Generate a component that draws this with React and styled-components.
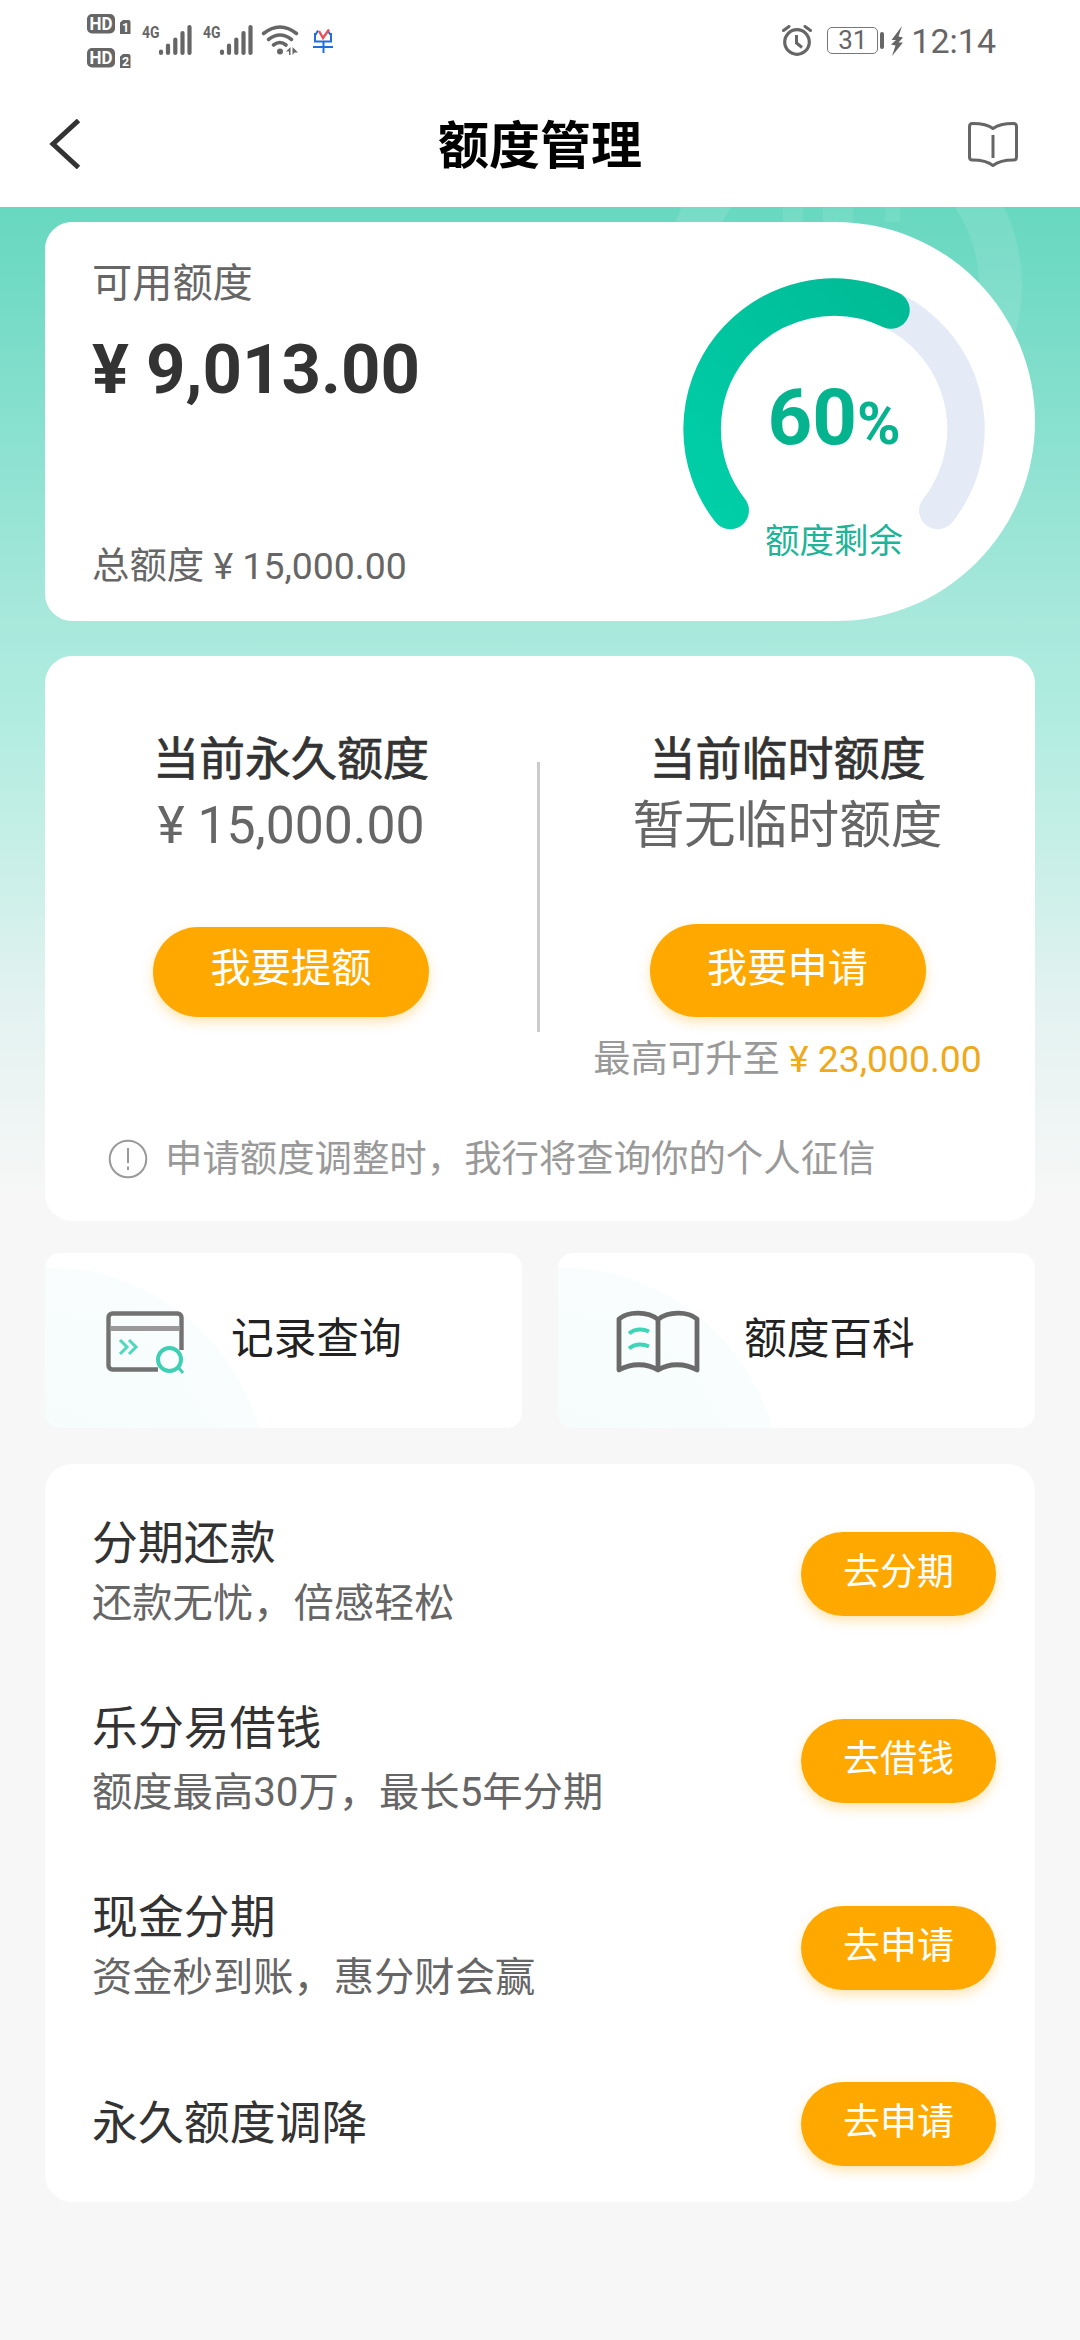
import React from 'react';
import styled, { createGlobalStyle } from 'styled-components';

const services = [
  { title: '分期还款', desc: '还款无忧，倍感轻松', action: '去分期' },
  { title: '乐分易借钱', desc: '额度最高30万，最长5年分期', action: '去借钱', gap: 7 },
  { title: '现金分期', desc: '资金秒到账，惠分财会赢', action: '去申请' },
  { title: '永久额度调降', action: '去申请' },
];

export default function App() {
  return (
    <>
      <GlobalStyle />
      <StatusBar>
        <StatusLeft />
        <StatusRight>
          <AlarmIcon />
          <Battery>31</Battery>
          <BoltIcon />
          <Time>12:14</Time>
        </StatusRight>
      </StatusBar>
      <NavBar>
        <BackIcon />
        <NavTitle>额度管理</NavTitle>
        <GuideIcon />
      </NavBar>
      <Page>
        <Watermark />
        <QuotaCard>
          <QuotaInfo>
            <QuotaLabel>可用额度</QuotaLabel>
            <QuotaAmount>¥ 9,013.00</QuotaAmount>
            <QuotaTotal>总额度 ¥ 15,000.00</QuotaTotal>
          </QuotaInfo>
          <Gauge />
        </QuotaCard>

        <LimitCard>
          <LimitColumns>
            <LimitColumn>
              <LimitTitle>当前永久额度</LimitTitle>
              <LimitValue>¥ 15,000.00</LimitValue>
              <LimitButton $height={90}>我要提额</LimitButton>
            </LimitColumn>
            <Divider />
            <LimitColumn>
              <LimitTitle>当前临时额度</LimitTitle>
              <LimitValue>暂无临时额度</LimitValue>
              <LimitButton $height={93}>我要申请</LimitButton>
              <LimitHint>
                最高可升至 <span>¥ 23,000.00</span>
              </LimitHint>
            </LimitColumn>
          </LimitColumns>
          <Notice>
            <InfoIcon />
            <p>申请额度调整时，我行将查询你的个人征信</p>
          </Notice>
        </LimitCard>

        <Tiles>
          <Tile>
            <RecordIcon />
            <p>记录查询</p>
          </Tile>
          <Tile>
            <WikiIcon />
            <p>额度百科</p>
          </Tile>
        </Tiles>

        <ServiceCard>
          {services.map(({ title, desc, action, gap }) => (
            <ServiceRow key={title}>
              <ServiceText $gap={gap}>
                <h3>{title}</h3>
                {desc && <p>{desc}</p>}
              </ServiceText>
              <ServiceButton>{action}</ServiceButton>
            </ServiceRow>
          ))}
        </ServiceCard>
      </Page>
    </>
  );
}

function SimBadge({ y, no }) {
  return (
    <g transform={`translate(0 ${y})`}>
      <rect x='87' y='0' width='28' height='19.5' rx='5' fill='#666' />
      <text x='89.5' y='16' fontSize='17.5' fontWeight='700' fill='#fff' textLength='23' lengthAdjust='spacingAndGlyphs'>
        HD
      </text>
      <path d='M120 8.5L123 6H128.500Q130.500 6 130.500 8V20H120Z' fill='#666' />
      <text x='122' y='17.500' fontSize='12.500' fontWeight='700' fill='#fff'>
        {no}
      </text>
    </g>
  );
}

function Signal({ x }) {
  return (
    <g transform={`translate(${x} 0)`}>
      <text x='0' y='38' fontSize='17' fontWeight='700' fill='#666' textLength='17.500' lengthAdjust='spacingAndGlyphs'>
        4G
      </text>
      <path
        d='M19 51.500V53M26 45.500V53M33.300 39.500V53M40.500 33V53M47.500 27V53'
        stroke='#666'
        strokeWidth='4.200'
        strokeLinecap='round'
      />
    </g>
  );
}

function StatusLeft() {
  return (
    <StatusSvg width='360' height='80' viewBox='0 0 360 80' fill='none'>
      <SimBadge y={14} no='1' />
      <SimBadge y={48} no='2' />
      <Signal x={142} />
      <Signal x={203} />
      <g stroke='#666' strokeWidth='3.600' strokeLinecap='round'>
        <path d='M263.500 33.500Q280 20.500 296.500 33.500' />
        <path d='M268.500 39.500Q280 30.500 291.500 39.500' />
        <path d='M273.500 45Q280 40 286 45' />
      </g>
      <circle cx='280' cy='51.500' r='3' fill='#666' />
      <path d='M286 51.500L290.500 47V55H289V51.500ZM292.500 47V55L294.500 52.500H298Z' fill='#666' />
      <path d='M318 30.500L316 34H315V41.500H331V34H330L327.500 30.500M313 47H333M323.500 42V53' stroke='#1f6fe0' strokeWidth='2' />
      <path d='M319 31L323 38L329 29.500' stroke='#e8505b' strokeWidth='2.400' />
    </StatusSvg>
  );
}

function AlarmIcon() {
  return (
    <svg width='30' height='31' viewBox='0 0 30 31' fill='none' stroke='#666'>
      <circle cx='15' cy='17' r='12.300' strokeWidth='3.200' />
      <path d='M14.500 10V18L20 22.500' strokeWidth='3' />
      <path d='M1.500 5.500L7 1.500M28.500 5.500L23 1.500' strokeWidth='3' strokeLinecap='round' />
    </svg>
  );
}

function BoltIcon() {
  return (
    <BoltSvg width='12' height='30' viewBox='0 0 12 30' fill='#666'>
      <path d='M11 0L0.500 14H5L0 18.500L4.500 19.500L1 30L12 16.500H7.500L12 11.500L7.500 10.500Z' />
    </BoltSvg>
  );
}

function BackIcon() {
  return (
    <svg width='32' height='50' viewBox='0 0 32 50' fill='none'>
      <path d='M29.500 1.500L4 25L29.500 48.500' stroke='#333' strokeWidth='5' />
    </svg>
  );
}

function GuideIcon() {
  return (
    <svg width='52' height='48' viewBox='0 0 52 48' fill='none' stroke='#666' strokeWidth='3'>
      <path
        d='M26 8.500C21 4.500 13 3.500 5.500 3.500Q2.500 3.500 2.500 6.500V37Q2.500 40 5.500 40C13 40 21 41.500 26 45.500C31 41.500 39 40 46.500 40Q49.500 40 49.500 37V6.500Q49.500 3.500 46.500 3.500C39 3.500 31 4.500 26 8.500Z'
        strokeLinejoin='round'
      />
      <path d='M26 15V38' />
    </svg>
  );
}

function InfoIcon() {
  return (
    <svg width='40' height='40' viewBox='0 0 40 40' fill='none' stroke='#999' strokeWidth='2'>
      <circle cx='20' cy='20' r='18.300' />
      <path d='M20 9V24M20 27.500V31' />
    </svg>
  );
}

function RecordIcon() {
  return (
    <svg width='90' height='66' viewBox='0 0 90 66' fill='none'>
      <rect x='7.500' y='5.500' width='73' height='56' rx='4' stroke='#727272' strokeWidth='4.400' />
      <path d='M9 20.500H79' stroke='#999' strokeWidth='5' />
      <path d='M19 32L26 39L19 46M28 32L35 39L28 46' stroke='#4fd8bd' strokeWidth='3' />
      <path d='M57 66V42H85V66Z' fill='#fbfefe' />
      <circle cx='68.500' cy='51.500' r='11.500' stroke='#3fcfb4' strokeWidth='4' />
      <path d='M77 59L82 65' stroke='#3fcfb4' strokeWidth='3' />
    </svg>
  );
}

function WikiIcon() {
  return (
    <svg width='90' height='66' viewBox='0 0 90 66' fill='none'>
      <path
        d='M44 11.500C34 3 14 3 5 11V62C17 55 33 55 44 62C55 55 71 55 83 62V11C74 3 54 3 44 11.500ZM44 11.500V62'
        stroke='#6a6a6a'
        strokeWidth='4.800'
        strokeLinejoin='round'
      />
      <path d='M15 25.500C21 20.500 29 20.500 35 23.500M15 40.500C21 35.500 29 35.500 35 38.500' stroke='#3fd6b8' strokeWidth='4' />
    </svg>
  );
}

function Watermark() {
  return (
    <WatermarkSvg width='440' height='300' viewBox='640 207 440 300' fill='none'>
      <circle cx='843' cy='285' r='157.500' stroke='#fff' strokeOpacity='0.100' strokeWidth='43' />
      <path d='M783 207H803V222H783ZM823 207H853V222H823ZM885 207H900V222H885Z' fill='#fff' fillOpacity='0.080' />
    </WatermarkSvg>
  );
}

function Gauge() {
  return (
    <GaugeBox>
      <svg width='302' height='302' viewBox='0 0 302 302' fill='none' strokeWidth='37.500' strokeLinecap='round'>
        <defs>
          <linearGradient id='gauge' x1='0' y1='1' x2='1' y2='0'>
            <stop offset='0' stopColor='#00cfa8' />
            <stop offset='1' stopColor='#00bb96' />
          </linearGradient>
        </defs>
        <path d='M47.200 232.500A132 132 0 1 1 254.800 232.500' stroke='#e5eaf7' />
        <path d='M47.200 232.500A132 132 0 0 1 208 32' stroke='url(#gauge)' />
      </svg>
      <GaugePercent>
        60<small>%</small>
      </GaugePercent>
      <GaugeLabel>额度剩余</GaugeLabel>
    </GaugeBox>
  );
}

const GlobalStyle = createGlobalStyle`
  * {
    box-sizing: border-box;
    margin: 0;
    padding: 0;
  }

  body {
    background: #f7f7f7;
    color: #333;
    font-family: Roboto, 'Noto Sans CJK SC', sans-serif;
  }

  svg {
    display: block;
    flex-shrink: 0;
  }

  button {
    border: none;
    font-family: inherit;
  }
`;

const StatusBar = styled.header`
  display: flex;
  justify-content: space-between;
  width: 1080px;
  height: 86px;
  background: #fff;
`;

const StatusSvg = styled.svg`
  font-family: Roboto, sans-serif;
`;

const StatusRight = styled.div`
  display: flex;
  align-items: center;
  height: 81px;
  padding-right: 84px;
  color: #666;
`;

const Battery = styled.span`
  position: relative;
  width: 51px;
  height: 27px;
  margin-left: 15px;
  border: 1.5px solid #777;
  border-radius: 5px;
  font-size: 26px;
  line-height: 25px;
  text-align: center;

  &::after {
    content: '';
    position: absolute;
    top: 4px;
    right: -7px;
    width: 4px;
    height: 17px;
    border-radius: 2px;
    background: #666;
  }
`;

const BoltSvg = styled.svg`
  margin-left: 13px;
`;

const Time = styled.span`
  margin-left: 8px;
  font-size: 34px;
  line-height: 40px;
`;

const NavBar = styled.nav`
  display: flex;
  align-items: center;
  justify-content: space-between;
  width: 1080px;
  height: 121px;
  padding: 0 61px 5px 49px;
  background: #fff;
`;

const NavTitle = styled.h1`
  padding: 6px 0 0 32px;
  color: #000;
  font-size: 51px;
  font-weight: 700;
  line-height: 60px;
`;

const Page = styled.main`
  position: relative;
  width: 1080px;
  height: 2133px;
  padding: 15px 45px 0;
  background: linear-gradient(
    #68d8c0 0,
    #74dbc6 90px,
    #a6e8db 400px,
    #b0ece0 500px,
    #c6efe7 640px,
    #e2f2f0 790px,
    #f7f7f7 990px
  );
`;

const WatermarkSvg = styled.svg`
  position: absolute;
  top: 0;
  right: 0;
`;

const Card = styled.section`
  position: relative;
  border-radius: 27px;
  background: #fff;
`;

const QuotaCard = styled(Card)`
  display: flex;
  justify-content: space-between;
  height: 399px;
  padding: 34px 50px 30px 47px;
  border-radius: 27px 200px 200px 27px;
`;

const QuotaInfo = styled.div`
  display: flex;
  flex-direction: column;
`;

const QuotaLabel = styled.p`
  color: #666;
  font-size: 40.200px;
  line-height: 56px;
`;

const QuotaAmount = styled.p`
  margin-top: 18px;
  font-size: 68.900px;
  font-weight: 700;
  line-height: 80px;
`;

const QuotaTotal = styled.p`
  margin-top: auto;
  color: #666;
  font-size: 37.400px;
  line-height: 50px;
`;

const GaugeBox = styled.div`
  position: relative;
  width: 302px;
  margin-top: 22px;
`;

const GaugePercent = styled.p`
  position: absolute;
  top: 95px;
  left: 0;
  width: 100%;
  color: #06b38f;
  font-size: 78px;
  font-weight: 700;
  line-height: 90px;
  text-align: center;

  small {
    font-size: 59px;
  }
`;

const GaugeLabel = styled.p`
  position: absolute;
  top: 238px;
  left: 0;
  width: 100%;
  color: #1fb398;
  font-size: 34.500px;
  line-height: 50px;
  text-align: center;
`;

const LimitCard = styled(Card)`
  height: 565px;
  margin-top: 35px;
  padding-top: 73px;
`;

const LimitColumns = styled.div`
  display: grid;
  grid-template-columns: 492px 3px 495px;
  height: 356px;
`;

const LimitColumn = styled.div`
  display: flex;
  flex-direction: column;
  align-items: center;
`;

const Divider = styled.div`
  height: 270px;
  margin-top: 33px;
  background: #ccc;
`;

const LimitTitle = styled.h2`
  font-size: 46px;
  font-weight: 400;
  line-height: 60px;
  -webkit-text-stroke: 0.7px #333;
`;

const LimitValue = styled.p`
  margin-top: 2px;
  color: #666;
  font-size: 51.700px;
  line-height: 70px;
`;

const Button = styled.button`
  border-radius: 50px;
  background: #ffa800;
  box-shadow: 0 5px 12px rgba(255, 168, 0, 0.3);
  color: #fff;
`;

const LimitButton = styled(Button)`
  width: 276px;
  height: ${props => props.$height}px;
  margin-top: ${props => 156 - props.$height}px;
  padding-bottom: ${props => 105 - props.$height}px;
  font-size: 40.200px;
`;

const LimitHint = styled.p`
  margin-top: 17px;
  color: #999;
  font-size: 37.300px;
  line-height: 50px;

  span {
    color: #efa91c;
  }
`;

const Notice = styled.div`
  display: flex;
  align-items: center;
  gap: 17px;
  margin-top: 49px;
  padding-left: 63px;
  color: #999;
  font-size: 37.400px;
  line-height: 50px;
`;

const Tiles = styled.div`
  display: grid;
  grid-template-columns: 1fr 1fr;
  gap: 36px;
  margin-top: 32px;
`;

const Tile = styled.div`
  display: flex;
  align-items: center;
  gap: 40px;
  height: 175px;
  padding-left: 56px;
  border-radius: 15px;
  background: radial-gradient(circle at 0 237px, #f5fbfb 0, #f9fdfd 222px, #fff 224px);
  color: #222;
  font-size: 42.700px;
  line-height: 60px;

  p {
    padding-bottom: 3px;
  }
`;

const ServiceCard = styled(Card)`
  display: flex;
  flex-direction: column;
  gap: 65px;
  height: 738px;
  margin-top: 36px;
  padding: 48px 39px 0 47px;
`;

const ServiceRow = styled.div`
  display: flex;
  align-items: center;
  justify-content: space-between;

  &:last-child {
    margin-top: 9px;
  }
`;

const ServiceText = styled.div`
  h3 {
    padding-top: 1px;
    font-size: 45.900px;
    font-weight: 400;
    line-height: 60px;
  }

  p {
    margin-top: ${props => props.$gap || 3}px;
    color: #666;
    font-size: 40.300px;
    line-height: 56px;
  }
`;

const ServiceButton = styled(Button)`
  width: 195px;
  height: 84px;
  margin: 2px 0 -2px;
  padding-bottom: 10px;
  font-size: 37px;
`;
